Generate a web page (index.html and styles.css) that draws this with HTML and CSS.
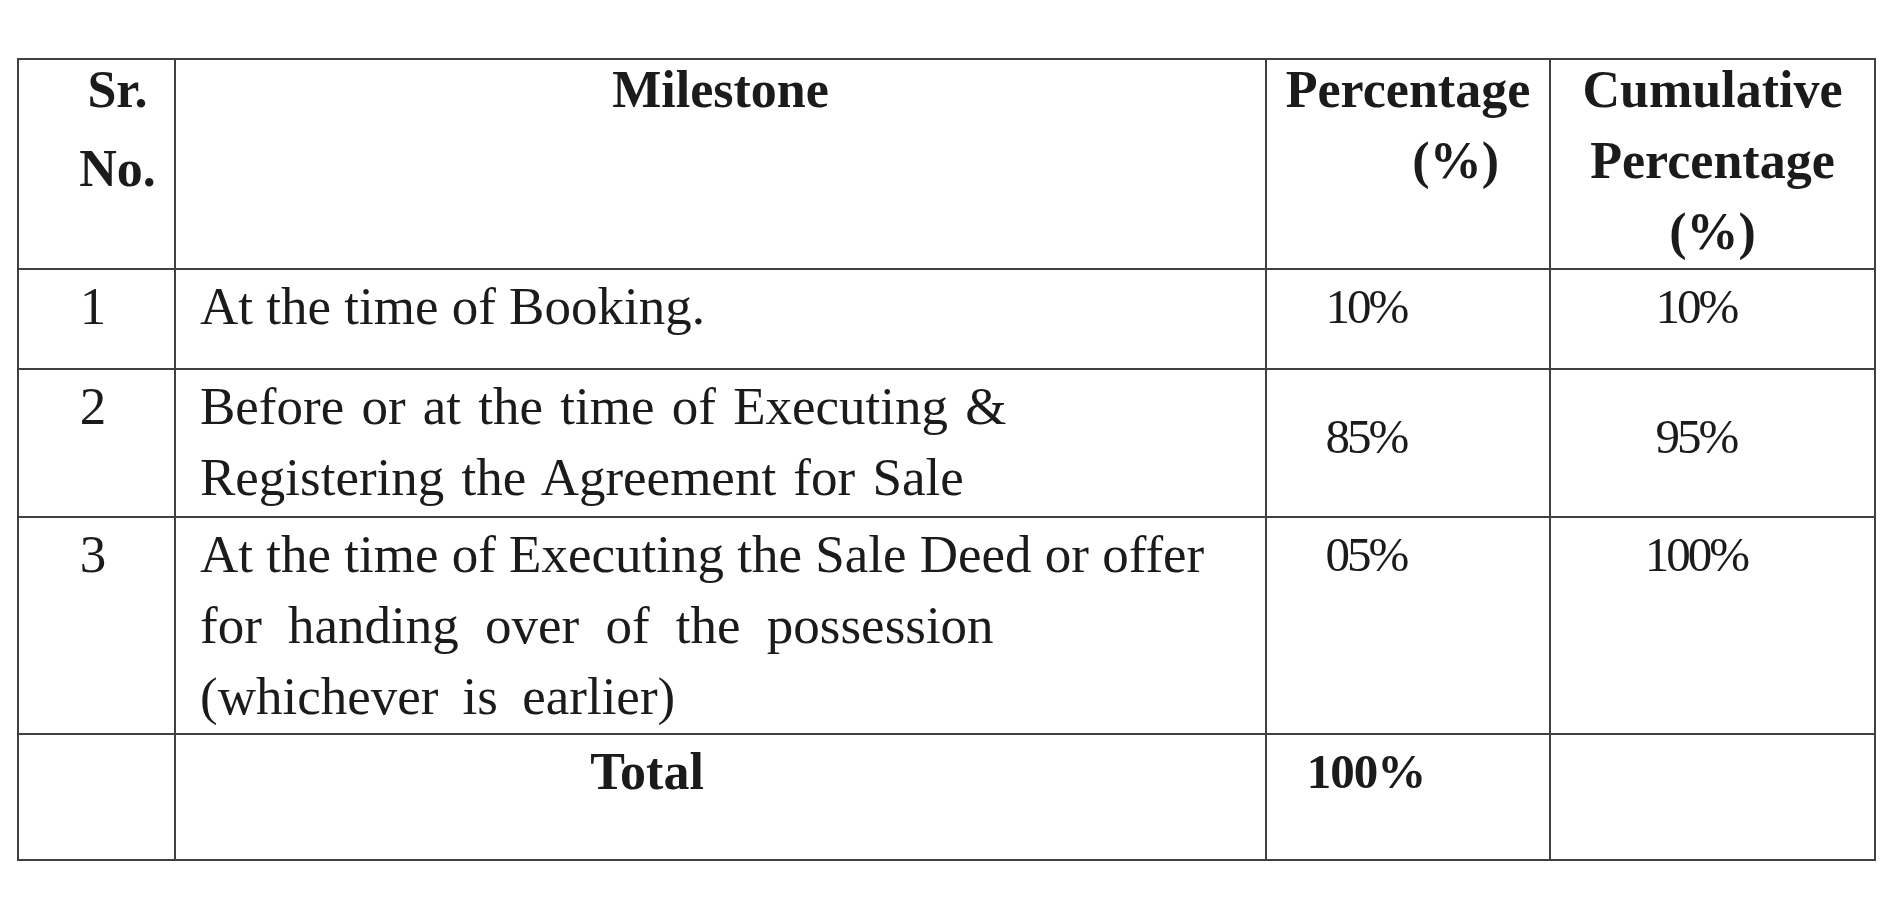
FILE: index.html
```html
<!DOCTYPE html>
<html lang="en">
<head>
<meta charset="utf-8">
<title>Payment Milestones</title>
<link rel="stylesheet" href="styles.css">
</head>
<body>
<table class="plan">
  <colgroup>
    <col class="c-sr">
    <col class="c-ms">
    <col class="c-pc">
    <col class="c-cu">
  </colgroup>
  <thead>
    <tr class="r-head">
      <th class="h-sr"><div class="hd hd-sr"><span>Sr.</span><span>No.</span></div></th>
      <th class="h-ms"><div class="hd"><span>Milestone</span></div></th>
      <th class="h-pc"><div class="hd"><span>Percentage</span><span class="pc-unit">(%)</span></div></th>
      <th class="h-cu"><div class="hd"><span>Cumulative</span><span>Percentage</span><span>(%)</span></div></th>
    </tr>
  </thead>
  <tbody>
    <tr class="r-1">
      <td class="sr">1</td>
      <td class="ms">At the time of Booking.</td>
      <td class="pc">10%</td>
      <td class="cu">10%</td>
    </tr>
    <tr class="r-2">
      <td class="sr">2</td>
      <td class="ms ms-wide">Before or at the time of Executing &amp;<br>Registering the Agreement for Sale</td>
      <td class="pc mid">85%</td>
      <td class="cu mid">95%</td>
    </tr>
    <tr class="r-3">
      <td class="sr">3</td>
      <td class="ms">At the time of Executing the Sale Deed or offer<br><span class="sp-a">for handing over of the possession</span><br><span class="sp-b">(whichever is earlier)</span></td>
      <td class="pc">05%</td>
      <td class="cu">100%</td>
    </tr>
    <tr class="r-total">
      <td class="sr"></td>
      <td class="ms total-label">Total</td>
      <td class="pc total-val">100%</td>
      <td class="cu"></td>
    </tr>
  </tbody>
</table>
</body>
</html>
```

FILE: styles.css
```css
html, body {
  margin: 0;
  padding: 0;
  background: #ffffff;
}

body {
  font-family: "Liberation Serif", "Times New Roman", serif;
  color: #1b1b1b;
}

.plan {
  margin: 58px 0 0 17px;
  width: 1857px;
  table-layout: fixed;
  border-collapse: collapse;
  border: 2px solid #404040;
}

.c-sr { width: 157px; }
.c-ms { width: 1091px; }
.c-pc { width: 284px; }
.c-cu { width: 325px; }

.plan th,
.plan td {
  border: 2px solid #404040;
  vertical-align: top;
}

.plan th {
  padding: 0;
}

/* header */
.r-head { height: 210px; }

.plan th {
  font-size: 52px;
  font-weight: bold;
}

.hd {
  display: flex;
  flex-direction: column;
  align-items: center;
  gap: 11px;
  line-height: 60px;
}

.hd-sr {
  gap: 19px;
  padding-left: 42px;
}

.h-pc .hd {
  align-items: stretch;
  text-align: center;
}

.pc-unit {
  text-align: right;
  padding-right: 50px;
}

/* body */
.plan td {
  font-size: 53px;
  line-height: 71px;
}

.r-1 { height: 100px; }
.r-2 { height: 148px; }
.r-3 { height: 217px; }
.r-total { height: 126px; }

.plan td.sr {
  text-align: center;
  padding: 1px 7px 0 0;
}

.plan td.ms {
  padding: 1px 0 0 24px;
  white-space: nowrap;
}

.ms-wide {
  word-spacing: 4px;
}

.sp-a { word-spacing: 13px; }
.sp-b { word-spacing: 11px; }

.plan td.pc,
.plan td.cu {
  letter-spacing: -3px;
  font-size: 49px;
  text-align: center;
}

.plan td.pc {
  padding: 1px 84px 0 0;
}

.plan td.cu {
  padding: 1px 33px 0 0;
}

.plan td.mid {
  vertical-align: middle;
  padding-top: 0;
  padding-bottom: 14px;
}

.plan td.total-label {
  font-weight: bold;
  font-size: 52px;
  text-align: center;
  padding: 1px 147px 0 0;
}

.plan td.total-val {
  font-weight: bold;
  font-size: 49px;
  letter-spacing: -1px;
}
```
